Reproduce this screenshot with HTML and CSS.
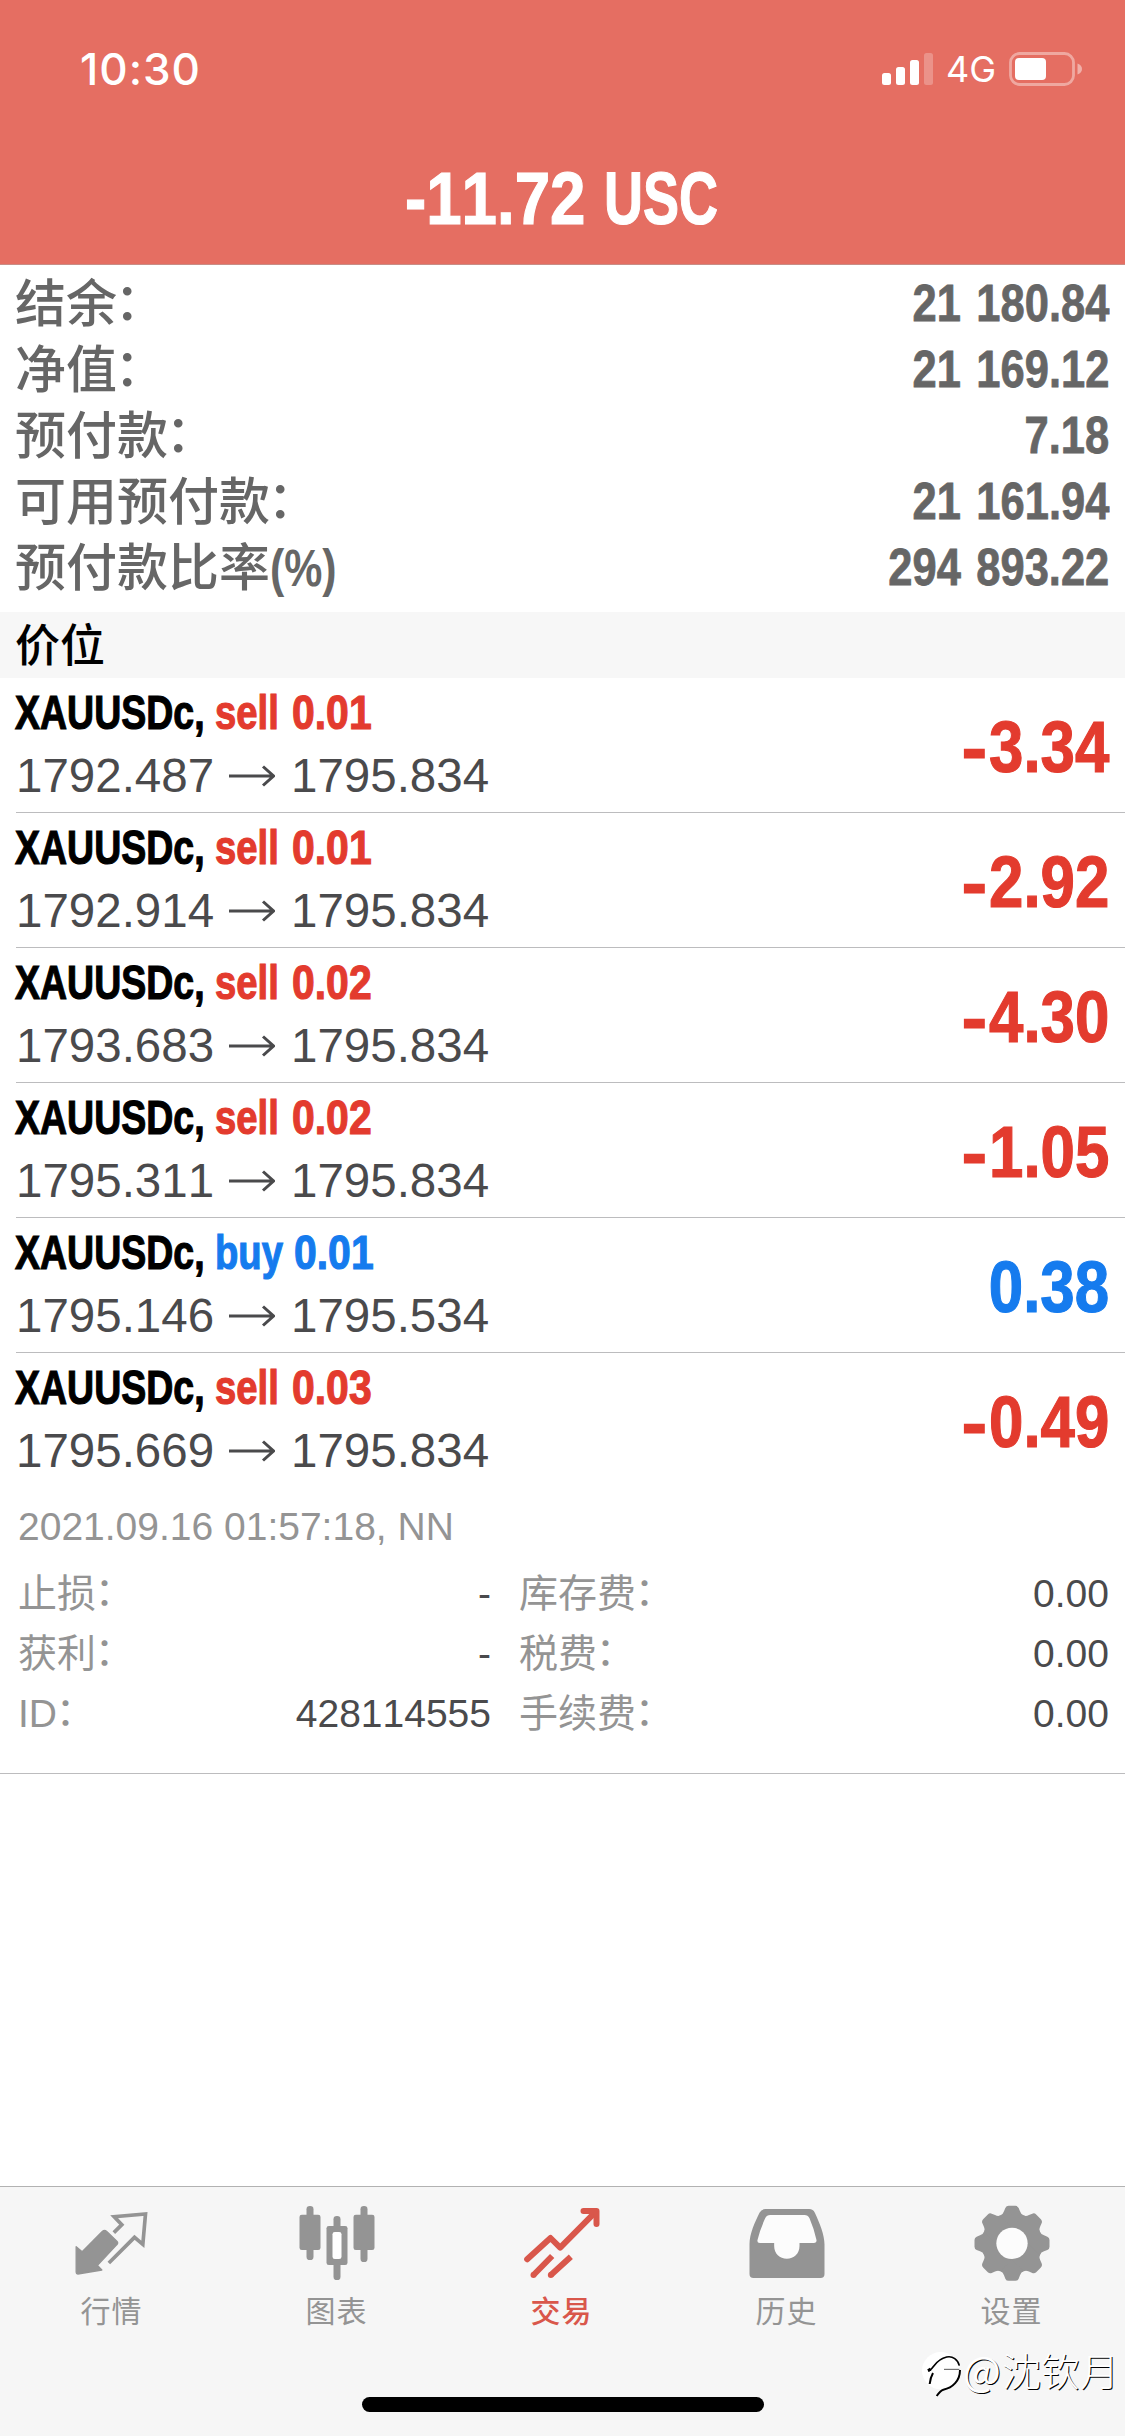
FILE: index.html
```html
<!DOCTYPE html>
<html lang="zh-CN">
<head>
<meta charset="utf-8">
<title>交易</title>
<link rel="stylesheet" href="styles.css">
</head>
<body>
<div class="screen">
  <header class="header">
    <div class="status">
      <span class="clock">10:30</span>
      <div class="indicators">
        <svg class="signal" width="54" height="34" viewBox="0 0 54 34" fill="#fff">
          <rect x="1" y="21" width="9" height="12" rx="2.5"/>
          <rect x="15" y="15" width="9" height="18" rx="2.5"/>
          <rect x="29" y="8" width="9" height="25" rx="2.5"/>
          <rect x="43" y="1" width="9" height="32" rx="2.5" opacity=".25"/>
        </svg>
        <span class="network">4G</span>
        <svg class="battery" width="74" height="34" viewBox="0 0 74 34" fill="#fff">
          <rect x="1.5" y="1.5" width="63" height="31" rx="9" fill="none" stroke="#fff" stroke-width="2.8" opacity=".4"/>
          <rect x="6" y="6" width="31" height="22" rx="4"/>
          <path d="M68.500 11.500c3 1 4.500 3 4.500 5.500s-1.500 4.500-4.500 5.500z" opacity=".45"/>
        </svg>
      </div>
    </div>
    <h1 class="total"><span class="total-num">-11.72</span><span class="total-cur">USC</span></h1>
  </header>

  <section class="account">
    <div class="account-row"><span class="label">结余<span class="colon">：</span></span><span class="amount">21 180.84</span></div>
    <div class="account-row"><span class="label">净值<span class="colon">：</span></span><span class="amount">21 169.12</span></div>
    <div class="account-row"><span class="label">预付款<span class="colon">：</span></span><span class="amount">7.18</span></div>
    <div class="account-row"><span class="label">可用预付款<span class="colon">：</span></span><span class="amount">21 161.94</span></div>
    <div class="account-row"><span class="label">预付款比率<span class="percent">(%)</span></span><span class="amount">294 893.22</span></div>
  </section>

  <h2 class="section-title">价位</h2>

  <main class="positions">
    <article class="position">
      <div class="info">
        <div class="name"><span class="symbol">XAUUSDc,</span><span class="side sell">sell</span><span class="qty sell">0.01</span></div>
        <div class="prices"><span class="price">1792.487</span><svg class="arrow" width="46" height="24" viewBox="0 0 46 24"><path d="M0 12H44M34 2.500L44.500 12L34 21.500"/></svg><span class="price">1795.834</span></div>
      </div>
      <span class="profit sell"><span class="minus">-</span>3.34</span>
    </article>
    <article class="position">
      <div class="info">
        <div class="name"><span class="symbol">XAUUSDc,</span><span class="side sell">sell</span><span class="qty sell">0.01</span></div>
        <div class="prices"><span class="price">1792.914</span><svg class="arrow" width="46" height="24" viewBox="0 0 46 24"><path d="M0 12H44M34 2.500L44.500 12L34 21.500"/></svg><span class="price">1795.834</span></div>
      </div>
      <span class="profit sell"><span class="minus">-</span>2.92</span>
    </article>
    <article class="position">
      <div class="info">
        <div class="name"><span class="symbol">XAUUSDc,</span><span class="side sell">sell</span><span class="qty sell">0.02</span></div>
        <div class="prices"><span class="price">1793.683</span><svg class="arrow" width="46" height="24" viewBox="0 0 46 24"><path d="M0 12H44M34 2.500L44.500 12L34 21.500"/></svg><span class="price">1795.834</span></div>
      </div>
      <span class="profit sell"><span class="minus">-</span>4.30</span>
    </article>
    <article class="position">
      <div class="info">
        <div class="name"><span class="symbol">XAUUSDc,</span><span class="side sell">sell</span><span class="qty sell">0.02</span></div>
        <div class="prices"><span class="price">1795.311</span><svg class="arrow" width="46" height="24" viewBox="0 0 46 24"><path d="M0 12H44M34 2.500L44.500 12L34 21.500"/></svg><span class="price">1795.834</span></div>
      </div>
      <span class="profit sell"><span class="minus">-</span>1.05</span>
    </article>
    <article class="position">
      <div class="info">
        <div class="name"><span class="symbol">XAUUSDc,</span><span class="side buy">buy</span><span class="qty buy">0.01</span></div>
        <div class="prices"><span class="price">1795.146</span><svg class="arrow" width="46" height="24" viewBox="0 0 46 24"><path d="M0 12H44M34 2.500L44.500 12L34 21.500"/></svg><span class="price">1795.534</span></div>
      </div>
      <span class="profit buy">0.38</span>
    </article>
    <article class="position open">
      <div class="info">
        <div class="name"><span class="symbol">XAUUSDc,</span><span class="side sell">sell</span><span class="qty sell">0.03</span></div>
        <div class="prices"><span class="price">1795.669</span><svg class="arrow" width="46" height="24" viewBox="0 0 46 24"><path d="M0 12H44M34 2.500L44.500 12L34 21.500"/></svg><span class="price">1795.834</span></div>
      </div>
      <span class="profit sell"><span class="minus">-</span>0.49</span>
    </article>
    <div class="details">
      <div class="opened">2021.09.16 01:57:18, NN</div>
      <dl class="detail-grid">
        <dt>止损<span class="colon">：</span></dt><dd>-</dd><dt>库存费<span class="colon">：</span></dt><dd>0.00</dd>
        <dt>获利<span class="colon">：</span></dt><dd>-</dd><dt>税费<span class="colon">：</span></dt><dd>0.00</dd>
        <dt>ID<span class="colon">：</span></dt><dd>428114555</dd><dt>手续费<span class="colon">：</span></dt><dd>0.00</dd>
      </dl>
    </div>
  </main>

  <nav class="tabs">
    <a class="tab">
      <svg class="icon" viewBox="37.5 66 240 240">
        <path fill="currentColor" stroke="currentColor" stroke-width="4" stroke-linejoin="round" d="M47 200L65 215L126 154Q132 149 138 154L169 184Q174 189 169 194L111 256L124 270L52 282Q47 282 47 277Z"/>
        <path fill="none" stroke="currentColor" stroke-width="11" d="M160 158L184 134L161 110L255 102L247 193L222 172L145 249"/>
      </svg>
      <span>行情</span>
    </a>
    <a class="tab">
      <svg class="icon" viewBox="712.5 66 240 240" fill="currentColor">
        <rect x="738" y="78" width="21" height="162" rx="10"/><rect x="717" y="104" width="63" height="106" rx="7"/>
        <rect x="819" y="108" width="21" height="192" rx="10"/><rect x="798" y="138" width="63" height="117" rx="7"/>
        <rect x="816" y="156" width="27" height="81" rx="7" fill="#fff"/>
        <rect x="900" y="78" width="21" height="168" rx="10"/><rect x="879" y="104" width="63" height="106" rx="7"/>
      </svg>
      <span>图表</span>
    </a>
    <a class="tab active">
      <svg class="icon" viewBox="37.5 66 240 240" fill="none" stroke="currentColor" stroke-width="18" stroke-linejoin="round">
        <path d="M50 238L120 174L149 203L256 95" stroke-linecap="round"/>
        <path d="M219 93H258V132" stroke-linecap="round"/>
        <path d="M125 228L69 285M181 230L121 285"/>
        <g fill="currentColor" stroke="none"><circle cx="69" cy="285" r="9"/><circle cx="121" cy="285" r="9"/></g>
      </svg>
      <span>交易</span>
    </a>
    <a class="tab">
      <svg class="icon" viewBox="712.5 66 240 240">
        <path fill="currentColor" d="M765 87H896Q908 87 913 98C928 130 942 165 942 193V282Q942 294 930 294H729Q717 294 717 282V193C717 160 734 125 747 98Q753 87 765 87Z"/>
        <path fill="#fcfcfc" d="M779 105H882Q892 105 897 115Q910 145 918 180Q919 189 910 189H867V198C867 222 850 236 829 236S791 222 791 198V189H748Q739 189 741 180Q748 150 764 115Q769 105 779 105Z"/>
      </svg>
      <span>历史</span>
    </a>
    <a class="tab">
      <svg class="icon" viewBox="217.5 36 240 240">
        <g fill="currentColor" transform="translate(334.500 160)">
          <circle r="91"/>
          <path id="teeth" d="M-34 -84Q-27 -87 -24 -96L-20 -106Q-17 -112.500 -10 -112.500H10Q17 -112.500 20 -106L24 -96Q27 -87 34 -84V84Q27 87 24 96L20 106Q17 112.500 10 112.500H-10Q-17 112.500 -20 106L-24 96Q-27 87 -34 84Z"/>
          <use href="#teeth" transform="rotate(45)"/><use href="#teeth" transform="rotate(90)"/><use href="#teeth" transform="rotate(135)"/>
          <circle r="47" fill="#fcfcfc"/>
        </g>
      </svg>
      <span>设置</span>
    </a>
  </nav>
  <div class="home-indicator"></div>
  <div class="watermark">
    <svg width="44" height="48" viewBox="66 486 132 144">
      <circle cx="122" cy="545" r="56" fill="#fff"/>
      <g fill="none" stroke="#000">
        <path stroke-width="5" d="M84 545C100 545 102 512 140 504C158 500 174 512 178 530"/>
        <path stroke-width="9" d="M84 545L92 540"/>
        <path stroke-width="6" d="M99 552Q91 566 89 585M180 543C180 575 158 597 130 602Q122 604 110 621"/>
        <path stroke-width="2" d="M132 541H178"/>
      </g>
    </svg>
    <span class="at">@</span><span>沈钦月</span>
  </div>
</div>
</body>
</html>
```
FILE: styles.css
```css
* { box-sizing: border-box; margin: 0; padding: 0; }

body {
  background: #fff;
  font-family: "Liberation Sans", "Noto Sans CJK SC", sans-serif;
  font-kerning: none;
}

.screen {
  position: relative;
  display: flex;
  flex-direction: column;
  width: 1125px;
  height: 2436px;
  overflow: hidden;
}

/* header */
.header {
  height: 265px;
  background: #e56e62;
  border-bottom: 1px solid #c98d86;
  color: #fff;
}
.status {
  display: flex;
  justify-content: space-between;
  align-items: center;
  height: 138px;
  padding: 0 42px 0 80px;
}
.clock {
  font: 500 44px/60px Inter, sans-serif;
  letter-spacing: 1px;
}
.indicators { display: flex; align-items: center; }
.network {
  width: 74px;
  padding-left: 11px;
  font: 400 36px/40px Inter, sans-serif;
}
.total {
  display: flex;
  height: 123px;
  padding-left: 405px;
  font-size: 74px;
  line-height: 122px;
}
.total-num, .total-cur { transform-origin: left; white-space: nowrap; -webkit-text-stroke: 1.2px; }
.total-num { width: 199px; transform: scaleX(.86); }
.total-cur { transform: scaleX(.73); }

/* full-width colon, raised to the middle of the ideographs */
.colon {
  display: inline-block;
  line-height: 1;
  transform: translate(-.03em, -.06em);
}

/* account summary */
.account {
  height: 347px;
  padding: 5px 16px 0 15px;
  color: #666;
}
.account-row {
  display: flex;
  justify-content: space-between;
  height: 66px;
  font-size: 51px;
  font-weight: 500;
  line-height: 66px;
}
.label { line-height: 70px; }
.label .colon { transform: translate(-.05em, -.03em); }
.percent {
  display: inline-block;
  font-weight: 700;
  transform: scaleX(.84);
  transform-origin: left;
}
.amount {
  font-size: 52px;
  font-weight: 700;
  word-spacing: 4px;
  transform: scaleX(.836);
  transform-origin: right;
  -webkit-text-stroke: .8px;
}
.section-title {
  height: 66px;
  padding-left: 15px;
  background: #f7f7f7;
  color: #000;
  font-size: 45px;
  font-weight: 500;
  line-height: 69px;
}

/* positions */
.position {
  display: flex;
  justify-content: space-between;
  height: 135px;
  margin-left: 16px;
  padding: 7px 16px 0 0;
  border-bottom: 1px solid #bcbcbe;
}
.position.open { border-bottom: 0; }
.name, .prices { display: flex; align-items: center; height: 54px; line-height: 54px; font-size: 49px; }
.name { margin: 0 0 10px -1px; font-weight: 700; color: #000; -webkit-text-stroke: 1.2px; }
.name span { transform-origin: left; white-space: nowrap; }
.symbol { width: 200px; transform: scaleX(.765); }
.side { width: 77px; transform: scaleX(.78); }
.side.buy { width: 79px; }
.qty { transform: scaleX(.835); }
.name .sell, .profit.sell { color: #e33b2e; }
.name .buy, .profit.buy { color: #157bee; }
.prices { color: #4a4a4c; }
.price { width: 198px; font-size: 47.5px; }
.arrow { margin: 0 16px 0 15px; fill: none; stroke: #4a4a4c; stroke-width: 3; }
.profit {
  font-size: 73px;
  font-weight: 700;
  line-height: 124px;
  transform: scaleX(.847);
  transform-origin: right;
  -webkit-text-stroke: 1.2px;
}
.minus {
  display: inline-block;
  margin-right: 2px;
  transform: scaleX(1.25);
  transform-origin: right;
}

.details {
  height: 286px;
  padding: 18px 16px 0 18px;
  border-bottom: 1px solid #bcbcbe;
  font-size: 39px;
  color: #949494;
}
.opened { height: 58px; line-height: 41px; }
.detail-grid {
  display: grid;
  grid-template-columns: 110px 363px 200px 1fr;
  grid-auto-rows: 60px;
  line-height: 60px;
}
.detail-grid dt { white-space: nowrap; }
.detail-grid dt:nth-of-type(2n) { margin-left: 28px; }
.detail-grid dd { color: #4a4a4c; text-align: right; }

/* tab bar */
.tabs {
  display: flex;
  height: 250px;
  margin-top: auto;
  padding-top: 15px;
  background: #f6f6f6;
  border-top: 1px solid #b2b2b2;
  color: #949494;
}
.tab {
  display: flex;
  flex: 1;
  flex-direction: column;
  align-items: center;
  font: 400 30px/54px "Noto Sans CJK SC", sans-serif;
}
.tab span { margin-right: 2px; letter-spacing: 1px; }
.tab.active { color: #d9574b; }
.tab.active span { font-weight: 500; }
.icon { display: block; width: 80px; height: 80px; }

.home-indicator {
  position: absolute;
  left: 362px;
  bottom: 24px;
  width: 402px;
  height: 15px;
  border-radius: 8px;
  background: #000;
}
.watermark {
  position: absolute;
  left: 922px;
  top: 2351px;
  display: flex;
  color: #fff;
  font: 300 39px/36px "Noto Sans CJK SC", sans-serif;
  text-shadow: 1px 1px 0 #000;
  white-space: nowrap;
}
.at { width: 39px; margin-left: -3px; font-size: 40px; font-weight: 400; }
```
